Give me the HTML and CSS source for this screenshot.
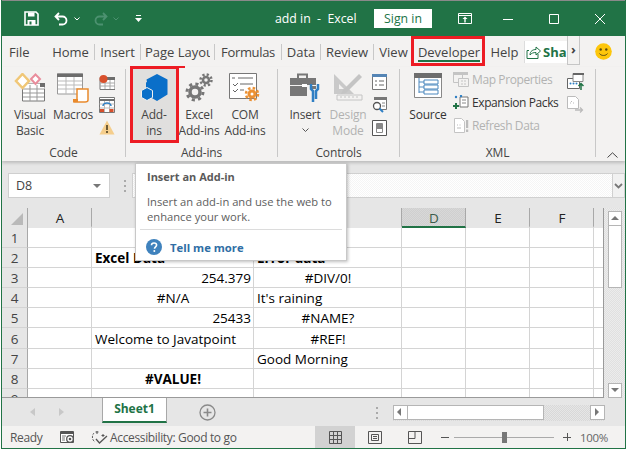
FILE: index.html
```html
<!DOCTYPE html>
<html lang="en">
<head>
<meta charset="utf-8">
<title>add in - Excel</title>
<link rel="stylesheet" href="styles.css">
</head>
<body>
<div class="window">
  <header class="titlebar">
    <div class="qat">
      <svg class="save" width="15" height="15" viewBox="0 0 15 15"><path d="M1 1h11l2 2v11H1z" fill="none" stroke="#fff" stroke-width="1.6"/><path d="M4 1.5h6.500v4H4zM3.500 9h8v5h-8z" fill="#fff"/><path d="M5.500 10.500h2v3h-2z" fill="#217346"/></svg>
      <svg class="undo" width="15" height="14" viewBox="0 0 15 14"><path d="M5 1 1.500 4.500 5 8M2 4.500h6.500a4 4 0 0 1 0 8H5" fill="none" stroke="#fff" stroke-width="1.800"/></svg>
      <svg class="caret" width="6" height="4" viewBox="0 0 6 4"><path d="M.5.500 3 3 5.500.500" fill="none" stroke="#fff"/></svg>
      <svg class="redo" width="15" height="14" viewBox="0 0 15 14"><path d="M10 1l3.500 3.500L10 8M13 4.500H6.500a4 4 0 0 0 0 8H10" fill="none" stroke="#4c9170" stroke-width="1.800"/></svg>
      <svg class="caret" width="6" height="4" viewBox="0 0 6 4"><path d="M.5.500 3 3 5.500.500" fill="none" stroke="#4c9170"/></svg>
      <svg class="custom" width="7" height="8" viewBox="0 0 7 8"><path d="M1 .5h5" stroke="#fff"/><path d="M0 3h7L3.500 7z" fill="#fff"/></svg>
    </div>
    <div class="doc-title">add in&nbsp; -&nbsp; Excel</div>
    <button class="signin">Sign in</button>
    <svg class="ribbon-opt" width="14" height="11" viewBox="0 0 14 11"><path d="M.5.500h13v10H.5zM1 2.500h12" fill="none" stroke="#fff"/><path d="M7 3.500 4.500 6h1.800v3.500h1.400V6h1.800z" fill="#fff"/></svg>
    <div class="winctl">
      <svg width="12" height="12" viewBox="0 0 12 12"><path d="M1 6.500h10" stroke="#fff"/></svg>
      <svg width="12" height="12" viewBox="0 0 12 12"><path d="M1.500 1.500h9v9h-9z" fill="none" stroke="#fff"/></svg>
      <svg width="12" height="12" viewBox="0 0 12 12"><path d="M1 1l10 10M11 1 1 11" stroke="#fff"/></svg>
    </div>
  </header>

  <nav class="tabs">
    <span class="tab t-file">File</span>
    <span class="tab t-home sep">Home</span>
    <span class="tab t-insert sep">Insert</span>
    <span class="tab t-page sep"><span class="clip">Page Layout</span></span>
    <span class="tab t-form sep">Formulas</span>
    <span class="tab t-data sep">Data</span>
    <span class="tab t-review sep">Review</span>
    <span class="tab t-view">View</span>
    <span class="tab t-dev">Developer</span>
    <span class="tab t-help">Help</span>
    <span class="share">
      <svg width="15" height="14" viewBox="0 0 15 14"><path d="M3 5.500H1v8h11V9" fill="none" stroke="#217346"/><path d="M4 10c0-4 3-5.500 6-5.500V2l4.500 4L10 10V7.500C7.500 7.500 5.500 8 4 10z" fill="none" stroke="#217346"/></svg>
      <span class="share-text">Share</span>
    </span>
    <span class="chev">›</span>
    <svg class="smile" width="17" height="17" viewBox="0 0 17 17"><circle cx="8.500" cy="8.500" r="8.300" fill="#fdc60b"/><circle cx="5.700" cy="6.500" r="1.200" fill="#5b4a10"/><circle cx="11.300" cy="6.500" r="1.200" fill="#5b4a10"/><path d="M4.500 10.500c1.500 2.600 6.500 2.600 8 0" fill="none" stroke="#5b4a10"/></svg>
  </nav>

  <section class="ribbon">
    <div class="group g-code">
      <div class="group-body">
        <div class="big b38">
          <svg width="32" height="30" viewBox="0 0 32 30"><path d="M8.500 11h22v17h-22z" fill="#fff" stroke="#777"/><path d="M8.500 11h22v5h-22z" fill="#fff"/><path d="M26 10h5v4h-5z" fill="#6d6d6d"/><path d="M9 16h21M9 20h21M9 24h21M16 12v16M23 12v16" stroke="#999"/><path d="M8.500 1 15 8l-6.500 7L2 8z" fill="#fff" stroke="#f0c777" stroke-width="2.500"/><path d="M21.500 1.500 26 6l-4.500 5L17 6z" fill="#fff" stroke="#e98d9c" stroke-width="2"/></svg>
          <span>Visual<br>Basic</span>
        </div>
        <div class="big b48">
          <svg width="32" height="30" viewBox="0 0 32 30"><path d="M.5 1h25v20H.5z" fill="#fff" stroke="#999"/><path d="M0 .5h26v3.500H0z" fill="#6d6d6d"/><path d="M1 8h24M1 12h24M1 16h24M9 4v17M17 4v17" stroke="#bbb"/><path d="M20 16h11v11c0 2-1.500 2-3 2H17v-2h3z" fill="#fff" stroke="#e98a2d" stroke-width="1.500"/><path d="M16 26h5v3h-5z" fill="#e98a2d"/></svg>
          <span>Macros</span>
        </div>
        <div class="small-col">
          <svg width="16" height="16" viewBox="0 0 16 16"><path d="M1 3.500h15v12H1z" fill="#fff" stroke="#777"/><path d="M1 3h15v3H1z" fill="#6d6d6d"/><path d="M1 9h15M1 12h15M6 6v9M11 6v9" stroke="#aaa"/><circle cx="4.500" cy="5" r="4" fill="#d8502c"/></svg>
          <svg width="16" height="16" viewBox="0 0 16 16"><path d="M.5.500h15v15H.5z" fill="#fff" stroke="#777"/><path d="M1 3h14" stroke="#6d6d6d" stroke-width="2"/><path d="M.5 7h15M.5 11h15M5.500 4v11M10.500 4v11" stroke="#bbb"/><path d="M4 9a4 3 0 0 1 8 0" fill="none" stroke="#2f7fc4" stroke-width="1.500"/><path d="M1 12h4v3H1zM10.500 12h4v3h-4z" fill="#d8502c"/></svg>
          <svg width="16" height="15" viewBox="0 0 16 15"><path d="M8 .5 15.500 14.500H.5z" fill="#f5ce8c"/><path d="M7 5h2v5H7zM7 11h2v2H7z" fill="#6c5a36"/></svg>
        </div>
      </div>
      <div class="group-label">Code</div>
    </div>

    <div class="group g-addins">
      <div class="group-body">
        <div class="big b44 selected">
          <svg width="27" height="28" viewBox="0 0 27 28"><path d="M16 0l10.500 5.500v15L16 27 9 23V18L5 15V8.500L6 8l-.5-2.500z" fill="#0a6fc9"/><path d="M6 13.500l5.500 3v7l-5.500 3-5.500-3v-7z" fill="#0a6fc9" stroke="#f3f2f1" stroke-width="1"/></svg>
          <span>Add-<br>ins</span>
        </div>
        <div class="big b46">
          <svg width="30" height="30" viewBox="0 0 30 30"><g fill="none" stroke="#777"><circle cx="11" cy="19" r="5" stroke-width="3.500"/><circle cx="11" cy="19" r="8" stroke-width="3" stroke-dasharray="3.100 3.200"/><circle cx="22" cy="7" r="3" stroke-width="2.500"/><circle cx="22" cy="7" r="5.500" stroke-width="2.500" stroke-dasharray="2.200 2.120"/></g></svg>
          <span>Excel<br>Add-ins</span>
        </div>
        <div class="big b46">
          <svg width="32" height="30" viewBox="0 0 32 30"><path d="M.5.500h27v25H.5z" fill="#fff" stroke="#777"/><path d="M3 5h3M9 5h15M4 11l2 2 3-3M11 11h13M4 17l2 2 3-3M11 17h4" fill="none" stroke="#666"/><g fill="none" stroke="#ec9133"><circle cx="23" cy="21" r="3" stroke-width="3"/><circle cx="23" cy="21" r="6" stroke-width="2.500" stroke-dasharray="2.500 2.200"/></g></svg>
          <span>COM<br>Add-ins</span>
        </div>
      </div>
      <div class="group-label">Add-ins</div>
    </div>

    <div class="group g-controls">
      <div class="group-body">
        <div class="big b44">
          <svg width="30" height="30" viewBox="0 0 30 30"><path d="M8 5V1.500h9V5" fill="none" stroke="#777" stroke-width="2"/><path d="M0 5h26v7H0zM0 13h17v10H0z" fill="#777"/><path d="M20 13h6v3h-6z" fill="#777"/><path d="M12 11h5v3h-5z" fill="#fff"/><path d="M21 11v5l2 2v11M28 11v5l-2 2v8" fill="none" stroke="#2f7fc4" stroke-width="2.500"/></svg>
          <span>Insert</span>
          <svg class="drop" width="7" height="4" viewBox="0 0 7 4"><path d="M.5.500 3.500 3.500 6.500.500" fill="none" stroke="#555"/></svg>
        </div>
        <div class="big b42 off">
          <svg width="30" height="30" viewBox="0 0 30 30"><path d="M1 1 21 21H1zM6 11v5h5z" fill="#c9c9c9" fill-rule="evenodd"/><path d="M10 17 26 1l3 3-16 16-5 1z" fill="#c4c4c4"/><path d="M4 22h25v5H4z" fill="#f3f2f1" stroke="#c4c4c4"/><path d="M8 23v2M12 23v2M16 23v2M20 23v2M24 23v2" stroke="#c4c4c4"/></svg>
          <span>Design<br>Mode</span>
        </div>
        <div class="small-col">
          <svg width="15" height="16" viewBox="0 0 15 16"><path d="M.5.500h14v15H.5z" fill="#fff" stroke="#777"/><path d="M0 0h15v3H0z" fill="#5585b5"/><path d="M3 7h2M7 7h5M3 11h2M7 11h5" stroke="#666"/></svg>
          <svg width="15" height="16" viewBox="0 0 15 16"><path d="M2 .5h12.500v12H8" fill="#fff" stroke="#777"/><path d="M2 0h13v3H2z" fill="#777"/><path d="M10 6h3M10 9h3" stroke="#888"/><circle cx="5" cy="9" r="3.500" fill="#fff" stroke="#555" stroke-width="1.300"/><path d="M7.500 11.500 11 15" stroke="#2f7fc4" stroke-width="2"/></svg>
          <svg width="15" height="16" viewBox="0 0 15 16"><path d="M.5.500h14v15H.5z" fill="#fff" stroke="#555"/><path d="M4.500 3.500h6v9h-6z" fill="#fff" stroke="#888"/><path d="M5 4h5v5H5z" fill="#888"/></svg>
        </div>
      </div>
      <div class="group-label">Controls</div>
    </div>

    <div class="group g-xml">
      <div class="group-body">
        <div class="big b44 dark">
          <svg width="28" height="30" viewBox="0 0 28 30"><path d="M.5.500h27v24H.5z" fill="#fff" stroke="#888"/><path d="M0 0h28v5H0z" fill="#6d6d6d"/><path d="M5 5v15M5 9h5M5 14h5M5 19h5" fill="none" stroke="#4a87bd"/><path d="M10 7h14v4H10zM10 12h14v4H10zM10 17h14v4H10z" fill="#fff" stroke="#4a87bd"/></svg>
          <span>Source</span>
        </div>
        <div class="xml-list">
          <div class="xml-item off">
            <svg width="16" height="15" viewBox="0 0 16 15"><path d="M.5.500h9v10h-9z" fill="none" stroke="#c4c4c4"/><path d="M0 0h15v3H0z" fill="#c4c4c4"/><path d="M5.500 6.500h10v8h-10z" fill="#f3f2f1" stroke="#c4c4c4"/><path d="M8 9h2M11 9h2M8 12h2M11 12h2" stroke="#c4c4c4"/></svg>
            <span>Map Properties</span>
          </div>
          <div class="xml-item">
            <svg width="16" height="15" viewBox="0 0 16 15"><path d="M7 2h8v10H7z" fill="#fff" stroke="#777"/><path d="M9 5h4M9 8h4" stroke="#888"/><circle cx="3" cy="2" r="1.200" fill="#2f7fc4"/><circle cx="8" cy="1" r="1.200" fill="#2f7fc4"/><path d="M0 11h6M3 8v6" stroke="#217346" stroke-width="2"/></svg>
            <span>Expansion Packs</span>
          </div>
          <div class="xml-item off">
            <svg width="16" height="15" viewBox="0 0 16 15"><path d="M1.500.5h7l3 3v11h-10z" fill="#fff" stroke="#c4c4c4"/><path d="M4 7h1M6.500 7h1M4 10h4" stroke="#bbb"/><path d="M13 2h2.200v8H13zM13 11.500h2.200V14H13z" fill="#bbb"/></svg>
            <span>Refresh Data</span>
          </div>
        </div>
        <div class="small-col xml-col">
          <svg width="17" height="17" viewBox="0 0 17 17"><path d="M0.500 5.500h12v10H.5z" fill="#fff" stroke="#666"/><path d="M6 .5h10v8H6z" fill="#fff" stroke="#888"/><path d="M6 0h11v2H6z" fill="#666"/><circle cx="3.500" cy="10.500" r="1" fill="#2f7fc4"/><circle cx="6.500" cy="10.500" r="1" fill="#2f7fc4"/><circle cx="9.500" cy="10.500" r="1" fill="#2f7fc4"/><path d="M14 17v-6M11.500 13 14 10.500 16.500 13" fill="none" stroke="#217346" stroke-width="1.500"/></svg>
          <svg width="17" height="17" viewBox="0 0 17 17"><path d="M.5.500h8l3 3v9H.5z" fill="#fff" stroke="#bbb"/><path d="M3 7h1M6 7h1M4.500 5v1" stroke="#bbb"/><path d="M8 14h7M13 11.500 15.500 14 13 16.500" fill="none" stroke="#bbb" stroke-width="1.300"/></svg>
        </div>
      </div>
      <div class="group-label">XML</div>
    </div>

    <svg class="collapse" width="11" height="6" viewBox="0 0 11 6"><path d="M.5 5.500 5.500.8l5 4.700" fill="none" stroke="#444"/></svg>
  </section>

  <section class="formula">
    <div class="namebox"><span>D8</span><i class="tri"></i></div>
    <div class="dots"><i></i><i></i><i></i></div>
    <div class="fx"></div>
    <div class="fx-drop"><svg width="9" height="6" viewBox="0 0 9 6"><path d="M1 1l3.500 3.500L8 1" fill="none" stroke="#777" stroke-width="1.800"/></svg></div>
  </section>

  <section class="sheet-area">
    <div class="grid">
      <div class="row head">
        <div class="corner"><i></i></div><div class="ch">A</div><div class="ch"></div><div class="ch"></div><div class="ch active">D</div><div class="ch">E</div><div class="ch">F</div><div class="ch last"></div>
      </div>
      <div class="row"><div class="rh">1</div><div></div><div></div><div></div><div></div><div></div><div></div><div></div></div>
      <div class="row"><div class="rh">2</div><div></div><div class="b">Excel Data</div><div class="b">Error data</div><div></div><div></div><div></div><div></div></div>
      <div class="row"><div class="rh">3</div><div></div><div class="r">254.379</div><div class="c">#DIV/0!</div><div></div><div></div><div></div><div></div></div>
      <div class="row"><div class="rh">4</div><div></div><div class="c">#N/A</div><div>It's raining</div><div></div><div></div><div></div><div></div></div>
      <div class="row"><div class="rh">5</div><div></div><div class="r">25433</div><div class="c">#NAME?</div><div></div><div></div><div></div><div></div></div>
      <div class="row tall"><div class="rh">6</div><div></div><div>Welcome to Javatpoint</div><div class="c">#REF!</div><div></div><div></div><div></div><div></div></div>
      <div class="row"><div class="rh">7</div><div></div><div></div><div>Good Morning</div><div></div><div></div><div></div><div></div></div>
      <div class="row"><div class="rh">8</div><div></div><div class="c b">#VALUE!</div><div></div><div></div><div></div><div></div><div></div></div>
      <div class="row partial"><div class="rh">9</div><div></div><div></div><div></div><div></div><div></div><div></div><div></div></div>
    </div>
    <div class="vscroll">
      <div class="sbtn up"><i></i></div>
      <div class="vthumb"></div>
      <div class="vtrack"></div>
      <div class="sbtn down"><i></i></div>
    </div>
  </section>

  <section class="sheetbar">
    <svg class="nav-l" width="5" height="8" viewBox="0 0 5 8"><path d="M5 0v8L0 4z" fill="#c8c8c8"/></svg>
    <svg class="nav-r" width="5" height="8" viewBox="0 0 5 8"><path d="M0 0v8l5-4z" fill="#c8c8c8"/></svg>
    <div class="sheet-tab">Sheet1</div>
    <svg class="plus" width="17" height="17" viewBox="0 0 17 17"><circle cx="8.500" cy="8.500" r="7.500" fill="none" stroke="#8a8a8a" stroke-width="1.300"/><path d="M8.500 4.500v8M4.500 8.500h8" stroke="#8a8a8a" stroke-width="1.600"/></svg>
    <div class="dots hd"><i></i><i></i><i></i></div>
    <div class="hscroll">
      <div class="hbtn"><i class="al"></i></div>
      <div class="hthumb"></div>
      <div class="htrack"></div>
      <div class="hbtn"><i class="ar"></i></div>
    </div>
  </section>

  <footer class="status">
    <span class="ready">Ready</span>
    <svg class="macro" width="15" height="13" viewBox="0 0 15 13"><path d="M.5.500h13v11H.5z" fill="#fff" stroke="#555"/><path d="M0 1h14v2H0z" fill="#555"/><path d="M2 5h4M2 7h3M2 9h3" stroke="#777"/><circle cx="10" cy="8" r="3.300" fill="#fff" stroke="#555" stroke-width="1.300"/><circle cx="10" cy="8" r="1.300" fill="#555"/></svg>
    <svg class="a11y" width="17" height="15" viewBox="0 0 17 15"><path d="M3 3a6 6 0 0 0 1 9" fill="none" stroke="#555" stroke-dasharray="2 1.200"/><path d="M6 1v3M4.500 2h3M12 4v3M10.500 5.500h3" stroke="#555"/><path d="M5 9l3.500 4L16 6" fill="none" stroke="#555" stroke-width="1.300"/></svg>
    <span class="a11y-text">Accessibility: Good to go</span>
    <div class="view selected-view"><svg width="13" height="13" viewBox="0 0 13 13"><path d="M.5.500h12v12H.5zM.5 4.500h12M.5 8.500h12M4.500.5v12M8.500.5v12" fill="none" stroke="#555"/></svg></div>
    <div class="view"><svg width="14" height="13" viewBox="0 0 14 13"><path d="M.5.500h13v12H.5z" fill="none" stroke="#555"/><path d="M3.500 3.500h7v6h-7zM5 5.500h4M5 7.500h4" fill="none" stroke="#555"/></svg></div>
    <div class="view"><svg width="14" height="13" viewBox="0 0 14 13"><path d="M.5.500h13v12H.5zM.5 7.500h6.500V.5" fill="none" stroke="#555"/></svg></div>
    <div class="zoom">
      <span class="zm"></span>
      <div class="slider"><i></i></div>
      <span class="zp"></span>
      <span class="pct">100%</span>
    </div>
  </footer>

  <div class="mark mark-addins"></div>
  <div class="mark mark-dev"></div>

  <aside class="tip">
    <div class="tip-title">Insert an Add-in</div>
    <p class="tip-desc">Insert an add-in and use the web to enhance your work.</p>
    <div class="tip-more">
      <svg width="16" height="16" viewBox="0 0 16 16"><circle cx="8" cy="8" r="8" fill="#3f82bd"/><path d="M5.500 6.200C5.500 4.700 6.700 4 8 4s2.600.7 2.600 2.100c0 1.800-2.100 1.700-2.100 3.600" fill="none" stroke="#fff" stroke-width="1.600"/><circle cx="8.300" cy="12" r="1" fill="#fff"/></svg>
      <span>Tell me more</span>
    </div>
  </aside>
</div>
</body>
</html>
```

FILE: styles.css
```css
* { box-sizing: border-box; }
html, body { margin: 0; padding: 0; background: #fff; }
body { width: 627px; height: 450px; overflow: hidden; font-family: "Open Sans", sans-serif; color: #444; }
svg { display: block; flex: none; }
i { display: block; }

.window { position: relative; width: 625px; height: 449px; margin-left: 1px; border: 1px solid #217346; border-top: 0; display: flex; flex-direction: column; overflow: hidden; background: #f3f2f1; }

.titlebar { height: 36px; flex: none; background: #217346; color: #fff; display: flex; align-items: center; font-size: 12.300px; border-top: 1px solid #8a8a8a; }
.qat { display: flex; align-items: center; width: 273px; padding-left: 22px; }
.undo { margin-left: 15px; }
.titlebar .caret { margin-left: 5px; }
.redo { margin-left: 13px; }
.custom { margin-left: 16px; }
.doc-title { width: 99px; white-space: nowrap; }
.signin { width: 58px; height: 19px; padding: 0; border: 0; background: #fff; color: #217346; font: 12.300px/19px "Open Sans", sans-serif; margin-right: 26px; }
.winctl { display: flex; margin-left: 30px; gap: 34px; }

.tabs { height: 31px; flex: none; display: flex; align-items: center; font-size: 13px; color: #444; position: relative; }
.tab { display: flex; align-items: center; justify-content: center; height: 16px; white-space: nowrap; }
.sep { border-right: 1px solid #c8c8c8; }
.t-file { width: 45px; justify-content: flex-start; padding-left: 7px; }
.t-home { width: 48px; }
.t-insert { width: 46px; letter-spacing: -.1px; }
.t-page { width: 74px; }
.clip { display: block; width: 65px; overflow: hidden; }
.t-form { width: 67px; letter-spacing: -.35px; }
.t-data { width: 39px; }
.t-review { width: 53px; letter-spacing: -.1px; }
.t-view { width: 39px; }
.t-dev { width: 72px; }
.t-help { width: 39px; }
.share { display: flex; align-items: center; gap: 2px; width: 43px; height: 22px; overflow: hidden; background: #fff; padding-left: 1px; color: #217346; font-weight: 700; white-space: nowrap; border-left: 1px solid #ddd; }
.chev { width: 13px; height: 29px; margin-top: -3px; background: #f3f2f1; border: 1px solid #c6c6c6; border-top: 0; font-size: 13px; line-height: 26px; text-align: center; font-weight: 700; }
.smile { margin-left: 15px; }
.t-dev::after { content: ""; position: absolute; left: 416px; top: 24px; width: 62px; height: 2px; background: #217346; }

.ribbon { height: 94px; flex: none; display: flex; font-size: 12px; line-height: 16px; position: relative; box-shadow: 0 2px 3px rgba(0,0,0,.18); z-index: 1; }
.group { display: flex; flex-direction: column; height: 88px; border-right: 1px solid #c8c8c8; margin-top: 2px; }
.group-body { flex: 1; display: flex; align-items: flex-start; }
.group-label { height: 13px; text-align: center; line-height: 18px; font-size: 12px; letter-spacing: -.15px; white-space: nowrap; }
.g-code { width: 124px; }
.g-code .group-body { padding-left: 9px; }
.g-addins { width: 152px; }
.g-addins .group-body { padding-left: 6px; }
.g-controls { width: 122px; }
.g-controls .group-body { padding-left: 5px; }
.g-xml { width: 196px; }
.g-xml .group-body { padding-left: 6px; }
.big { display: flex; flex-direction: column; align-items: center; text-align: center; height: 71px; padding-top: 4px; font-size: 12px; letter-spacing: -.2px; }
.big svg:first-child { height: 30px; margin-bottom: 4px; }
.big .drop { margin-top: 5px; }
.b38 { width: 38px; } .b42 { width: 42px; } .b44 { width: 44px; } .b46 { width: 46px; } .b48 { width: 48px; }
.selected { background: #e0dfde; }
.off { color: #b2b2b2; }
.dark { color: #333; }
.small-col { display: flex; flex-direction: column; align-items: center; width: 20px; gap: 7px; padding-top: 5px; }
.xml-list { width: 112px; display: flex; flex-direction: column; gap: 8px; padding: 3px 0 0 3px; }
.xml-item { display: flex; align-items: center; gap: 3px; height: 15px; white-space: nowrap; font-size: 12px; letter-spacing: -.4px; color: #333; }
.xml-item.off { color: #b2b2b2; }
.xml-col { width: 26px; gap: 6px; padding-top: 4px; }
.collapse { position: absolute; right: 7px; bottom: 3px; }

.formula { height: 47px; flex: none; background: #e6e6e6; display: flex; align-items: center; padding-top: 2px; }
.namebox { width: 102px; height: 25px; margin-left: 6px; border: 1px solid #cfcfcf; background: #fff; display: flex; align-items: center; justify-content: space-between; padding: 0 8px 0 7px; font-size: 12.500px; }
.tri { width: 0; height: 0; border: 4px solid transparent; border-top: 4px solid #777; margin-top: 4px; }
.dots { display: flex; flex-direction: column; gap: 3px; margin-left: 14px; }
.dots i { width: 2px; height: 2px; background: #aaa; }
.fx { width: 484px; height: 25px; margin-left: 6px; background: repeating-conic-gradient(#f5f5f5 0 25%, #fff 0 50%) 0 0/2px 2px; border: 1px solid #d0d0d0; }
.fx-drop { width: 12px; height: 25px; background: #f1f1f1; border: 1px solid #d0d0d0; border-left: 0; display: flex; align-items: center; justify-content: center; }

.sheet-area { height: 190px; flex: none; display: flex; background: #fff; }
.grid { width: 602px; border-right: 1px solid #9a9a9a; border-bottom: 1px solid #9a9a9a; background: #fff; overflow: hidden; }
.row { display: grid; grid-template-columns: 26px 64px 162px 148px 64px 64px 64px 10px; height: 20px; font-size: 13.500px; line-height: 21px; color: #000; }
.row > div { border-right: 1px solid #d4d4d4; border-bottom: 1px solid #d4d4d4; padding: 0 2px 0 3px; white-space: nowrap; overflow: hidden; min-width: 0; }
.tall { height: 21px; line-height: 22px; }
.partial { height: 9px; }
.head { background: #e6e6e6; line-height: 20px; color: #222; }
.head > div { border-bottom: 0; border-right-color: #a8a8a8; text-align: center; }
.row > .corner { position: relative; }
.corner i { position: absolute; left: 9px; bottom: 3px; border-left: 12px solid transparent; border-bottom: 12px solid #b9b9b9; }
.row > .ch { border-bottom: 2px solid transparent; background-clip: padding-box; }
.row > .active { background: repeating-conic-gradient(#cfcfcf 0 25%, #d8d8d8 0 50%) 0 0/2px 2px; color: #3b5c4a; border-bottom: 2px solid #217346; }
.row > .last { border-right: 0; }
.row > .rh { background: #e6e6e6; text-align: center; color: #444; border-right-color: #a8a8a8; border-bottom-color: #d4d4d4; padding: 0; }
.r { text-align: right; }
.c { text-align: center; }
.b { font-weight: 700; }

.vscroll { width: 21px; background: repeating-conic-gradient(#e0e0e0 0 25%, #ececec 0 50%) 0 0/2px 2px; padding: 3px 3px 0 4px; display: flex; flex-direction: column; }
.sbtn { width: 14px; height: 15px; background: #fff; border: 1px solid #b5b5b5; flex: none; position: relative; }
.sbtn i { position: absolute; left: 2px; border: 4px solid transparent; }
.up i { top: 0; border-bottom: 4px solid #777; }
.down i { top: 4px; border-top: 4px solid #777; }
.vthumb { width: 14px; height: 62px; background: #fff; border: 1px solid #b5b5b5; border-top: 0; flex: none; }
.vtrack { flex: 1; }

.sheetbar { height: 28px; flex: none; background: #e6e6e6; display: flex; align-items: flex-start; }
.nav-l { margin: 10px 0 0 28px; }
.nav-r { margin: 10px 0 0 24px; }
.sheet-tab { width: 65px; height: 25px; margin-left: 38px; background: #fff; border: 1px solid #a8a8a8; border-top: 0; border-bottom: 2px solid #217346; color: #217346; font-weight: 700; font-size: 12px; line-height: 22px; text-align: center; }
.plus { margin: 6px 0 0 32px; }
.hd { margin: 9px 0 0 160px; }
.hscroll { width: 212px; height: 16px; margin: 7px 0 0 15px; display: flex; background: repeating-conic-gradient(#d8d8d8 0 25%, #e6e6e6 0 50%) 0 0/2px 2px; }
.hbtn { width: 15px; height: 15px; background: #fff; border: 1px solid #b5b5b5; position: relative; flex: none; }
.hbtn i { position: absolute; top: 2px; border: 4px solid transparent; }
.al { left: -1px; border-right: 4px solid #777 !important; }
.ar { left: 4px; border-left: 4px solid #777 !important; }
.hthumb { width: 136px; height: 15px; background: #fff; border: 1px solid #b5b5b5; border-left: 0; }
.htrack { flex: 1; }

.status { height: 22px; flex: none; display: flex; align-items: center; font-size: 12px; letter-spacing: -.35px; color: #555; background: #f3f2f1; }
.ready { width: 58px; padding-left: 8px; }
.a11y { margin-left: 16px; }
.a11y-text { width: 205px; margin-left: 2px; white-space: nowrap; }
.view { width: 40px; height: 22px; display: flex; align-items: center; justify-content: center; }
.selected-view { background: #d2d2d2; }
.zoom { display: flex; align-items: center; height: 22px; margin-left: 6px; }
.zm { width: 8px; height: 1px; background: #555; }
.slider { width: 100px; height: 1px; background: #aaa; margin: 0 9px 0 5px; position: relative; }
.slider i { position: absolute; left: 48px; top: -5px; width: 5px; height: 11px; background: #777; }
.zp { width: 8px; height: 8px; background: linear-gradient(#555,#555) center/8px 1px no-repeat, linear-gradient(#555,#555) center/1px 8px no-repeat; }
.pct { margin-left: 9px; font-size: 11.500px; letter-spacing: -.3px; color: #666; }

.mark { position: absolute; border: 3px solid #ed1c24; z-index: 3; pointer-events: none; }
.mark-addins { left: 128px; top: 66px; width: 49px; height: 77px; }
.mark-addins::after { content: ""; position: absolute; left: 46px; top: -3px; width: 6px; height: 2px; background: #ed1c24; }
.mark-dev { left: 409px; top: 36px; width: 74px; height: 30px; }

.tip { position: absolute; left: 133px; top: 163px; width: 212px; height: 98px; background: #fff; border: 1px solid #c8c8c8; box-shadow: 1px 1px 3px rgba(0,0,0,.25); padding: 5px 4px 0; z-index: 4; color: #5e5e5e; font-size: 11px; }
.tip-title { font-weight: 700; line-height: 16px; padding-left: 7px; color: #5a5a5a; font-size: 11px; }
.tip-desc { margin: 9px 0 0; padding: 0 7px; line-height: 15px; font-size: 11.200px; }
.tip-more { display: flex; align-items: center; gap: 8px; margin-top: 5px; padding: 9px 0 0 6px; border-top: 1px solid #dcdcdc; color: #2f6ea5; font-weight: 700; font-size: 11.300px; }
```
